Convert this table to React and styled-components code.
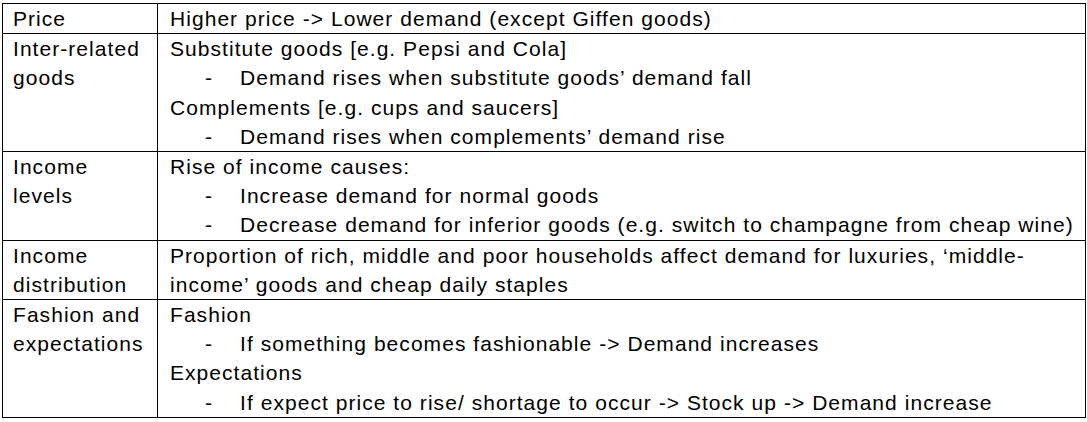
import React from "react";
import styled, { createGlobalStyle } from "styled-components";

const Global = createGlobalStyle`
  html, body {
    margin: 0;
    padding: 0;
    background: #ffffff;
  }
  body {
    font-family: "Liberation Sans", Arial, sans-serif;
    color: #000000;
  }
`;

const Page = styled.div`
  padding: 3px 0 0 2px;
`;

const Table = styled.table`
  border-collapse: collapse;
  table-layout: fixed;
  width: 1084px;
  font-size: 21px;
  letter-spacing: 1.05px;
  line-height: 29.2px;
`;

const Row = styled.tr``;

const LabelCell = styled.td`
  box-sizing: border-box;
  width: 155px;
  border: 1px solid #000;
  padding: 0 2px 0 10px;
  vertical-align: top;
  text-align: left;
  white-space: nowrap;
`;

const ContentCell = styled.td`
  box-sizing: border-box;
  border: 1px solid #000;
  padding: 0 2px 0 12px;
  vertical-align: top;
  white-space: nowrap;
`;

const Line = styled.div``;

const Bullet = styled.div`
  display: flex;
  padding-left: 35px;
`;

const Dash = styled.span`
  flex: 0 0 35px;
`;

const rows = [
  {
    label: ["Price"],
    content: [{ t: "Higher price -> Lower demand (except Giffen goods)" }],
  },
  {
    label: ["Inter-related", "goods"],
    content: [
      { t: "Substitute goods [e.g. Pepsi and Cola]" },
      { t: "Demand rises when substitute goods\u2019 demand fall", b: true },
      { t: "Complements [e.g. cups and saucers]" },
      { t: "Demand rises when complements\u2019 demand rise", b: true },
    ],
  },
  {
    label: ["Income", "levels"],
    content: [
      { t: "Rise of income causes:" },
      { t: "Increase demand for normal goods", b: true },
      {
        t: "Decrease demand for inferior goods (e.g. switch to champagne from cheap wine)",
        b: true,
      },
    ],
  },
  {
    label: ["Income", "distribution"],
    content: [
      {
        t: "Proportion of rich, middle and poor households affect demand for luxuries, \u2018middle-",
      },
      { t: "income\u2019 goods and cheap daily staples" },
    ],
  },
  {
    label: ["Fashion and", "expectations"],
    content: [
      { t: "Fashion" },
      { t: "If something becomes fashionable -> Demand increases", b: true },
      { t: "Expectations" },
      {
        t: "If expect price to rise/ shortage to occur -> Stock up -> Demand increase",
        b: true,
      },
    ],
  },
];

export default function App() {
  return (
    <Page>
      <Global />
      <Table>
        <tbody>
          {rows.map((r, i) => (
            <Row key={i}>
              <LabelCell>
                {r.label.map((l, j) => (
                  <Line key={j}>{l}</Line>
                ))}
              </LabelCell>
              <ContentCell>
                {r.content.map((c, j) =>
                  c.b ? (
                    <Bullet key={j}>
                      <Dash>-</Dash>
                      <span>{c.t}</span>
                    </Bullet>
                  ) : (
                    <Line key={j}>{c.t}</Line>
                  )
                )}
              </ContentCell>
            </Row>
          ))}
        </tbody>
      </Table>
    </Page>
  );
}
